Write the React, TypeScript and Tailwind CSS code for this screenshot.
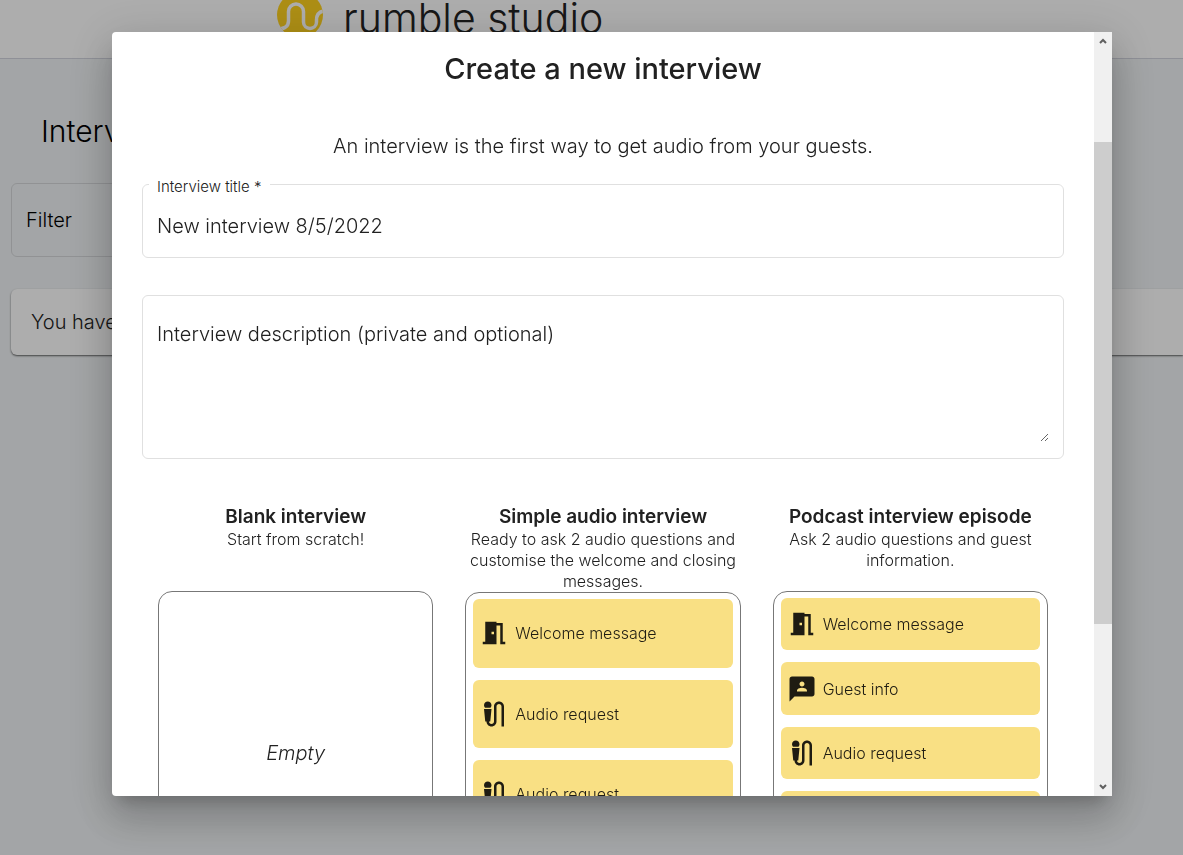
import { useState } from "react";
import type { IconType } from "react-icons";
import { Md3P, MdMeetingRoom, MdMicExternalOn } from "react-icons/md";

type Step = { label: string; Icon: IconType };

const welcome: Step = { label: "Welcome message", Icon: MdMeetingRoom };
const guest: Step = { label: "Guest info", Icon: Md3P };
const audio: Step = { label: "Audio request", Icon: MdMicExternalOn };
const closing: Step = { label: "Closing message", Icon: MdMeetingRoom };

const templates: { title: string; description: string; steps: Step[] }[] = [
  {
    title: "Blank interview",
    description: "Start from scratch!",
    steps: [],
  },
  {
    title: "Simple audio interview",
    description:
      "Ready to ask 2 audio questions and customise the welcome and closing messages.",
    steps: [welcome, audio, audio, closing],
  },
  {
    title: "Podcast interview episode",
    description: "Ask 2 audio questions and guest information.",
    steps: [welcome, guest, audio, audio, closing],
  },
];

function Logo() {
  return (
    <svg viewBox="0 0 46 46" className="w-[46px] h-[46px] shrink-0" aria-hidden="true">
      <defs>
        <clipPath id="disc">
          <circle cx="23" cy="23" r="23" />
        </clipPath>
      </defs>
      <g clipPath="url(#disc)">
        <rect width="46" height="46" fill="#ffd21f" />
        <path
          d="M0 37c8 0 11.500-3 11.500-8v-9.500a7.500 7.500 0 0 1 15 0V30c0 8.500 13 8.500 13 0v-2c0-5 2-8 7-9"
          fill="none"
          stroke="#fff"
          strokeWidth="3.500"
        />
      </g>
    </svg>
  );
}

function Page() {
  return (
    <div className="min-h-screen bg-[#f1f4f6] text-black">
      <header className="h-[59px] bg-white border-b border-[#d3d5df] overflow-hidden">
        <div className="flex items-start gap-5 pl-[277px]">
          <div className="-mt-2">
            <Logo />
          </div>
          <span className="-mt-2 text-[41px] leading-[52px] font-light whitespace-nowrap text-[#222]">
            rumble studio
          </span>
        </div>
      </header>
      <main className="pl-[11px]">
        <h1 className="pl-[30px] pt-[52px] pb-[32px] text-[30px] leading-[40px] font-light">Interviews</h1>
        <div className="w-1/2 h-[74px] flex items-center px-[14px] border border-[#d6d8db] rounded-md">
          <input
            aria-label="Filter"
            placeholder="Filter"
            className="w-full bg-transparent text-[20px] font-light placeholder:text-black outline-none"
          />
        </div>
        <div className="mt-8 h-[66px] flex items-center pl-5 bg-white rounded-l-md shadow-[0_1px_2px_rgba(0,0,0,0.6)] text-[20px] font-light text-[#222]">
          You have no interview yet.
        </div>
      </main>
    </div>
  );
}

function Scrollbar() {
  return (
    <div className="w-[18px] shrink-0 flex flex-col bg-[#f0f0f0] text-[#606060]" aria-hidden="true">
      <div className="h-[18px] flex items-center justify-center">
        <svg viewBox="0 0 8 6" className="w-2 h-1.5">
          <path d="M1 5l3-3 3 3" fill="none" stroke="currentColor" strokeWidth="2" />
        </svg>
      </div>
      <div className="flex-[92]" />
      <div className="flex-[482] bg-[#cdcdcd]" />
      <div className="flex-[154]" />
      <div className="h-[18px] flex items-center justify-center">
        <svg viewBox="0 0 8 6" className="w-2 h-1.5">
          <path d="M1 1l3 3 3-3" fill="none" stroke="currentColor" strokeWidth="2" />
        </svg>
      </div>
    </div>
  );
}

export default function App() {
  const [title, setTitle] = useState("New interview 8/5/2022");
  const [description, setDescription] = useState("");

  return (
    <div className="h-screen overflow-hidden font-['Inter','Open_Sans',sans-serif]">
      <Page />
      <div className="fixed inset-0 flex bg-black/32 pt-8 pb-[59px] pl-28 pr-[71px]">
        <div
          role="dialog"
          aria-labelledby="dialog-title"
          className="flex-1 flex min-w-0 overflow-hidden rounded-l-sm bg-white text-[#212121] font-light shadow-[0_11px_15px_-7px_rgba(0,0,0,0.2),0_24px_38px_3px_rgba(0,0,0,0.14),0_9px_46px_8px_rgba(0,0,0,0.12)]"
        >
          <div className="flex-1 min-w-0 overflow-y-auto [scrollbar-width:none] px-[30px] pb-8">
            <h2 id="dialog-title" className="pt-[17px] text-center text-[29px] leading-[40px] font-medium">
              Create a new interview
            </h2>
            <p className="mt-[43px] text-center text-[20px] leading-[28px]">
              An interview is the first way to get audio from your guests.
            </p>

            <div className="relative mt-6 h-[74px] border border-[#e0e0e0] rounded-md">
              <label
                htmlFor="title"
                className="absolute -top-2 left-1.5 px-2 bg-white text-[15px] leading-[20px]"
              >
                Interview title *
              </label>
              <input
                id="title"
                value={title}
                onChange={(e) => setTitle(e.target.value)}
                className="w-full h-full px-[14px] pt-[10px] bg-transparent text-[20px] outline-none"
              />
            </div>

            <div className="mt-[37px] h-[164px] pt-6 px-[14px] border border-[#e0e0e0] rounded-md">
              <textarea
                aria-label="Interview description (private and optional)"
                placeholder="Interview description (private and optional)"
                value={description}
                onChange={(e) => setDescription(e.target.value)}
                className="block w-full h-[122px] resize-y bg-transparent text-[20px] leading-[28px] placeholder:text-[#212121] outline-none"
              />
            </div>

            <div className="mt-[46px] grid grid-cols-3">
              {templates.map((t) => (
                <div key={t.title} className="px-4">
                  <div className="min-h-[86px] text-center">
                    <h3 className="text-[19px] leading-[24px] font-semibold whitespace-nowrap">{t.title}</h3>
                    <p className="text-[16px] leading-[21px]">{t.description}</p>
                  </div>
                  <button
                    type="button"
                    className="w-full h-[324px] flex flex-col px-[7px] border border-[#777] rounded-[14px] text-left"
                  >
                    {t.steps.length === 0 && (
                      <span className="m-auto text-[20px] italic">Empty</span>
                    )}
                    {t.steps.map((s, i) => (
                      <span key={i} className="flex-1 w-full flex py-1.5">
                        <span className="flex-1 flex items-center gap-1.5 pl-1.5 rounded-md bg-[#f9e084] text-[16px] text-[#1f1c12]">
                          <s.Icon className="w-[30px] h-[30px]" />
                          {s.label}
                        </span>
                      </span>
                    ))}
                  </button>
                </div>
              ))}
            </div>
          </div>
          <Scrollbar />
        </div>
      </div>
    </div>
  );
}
